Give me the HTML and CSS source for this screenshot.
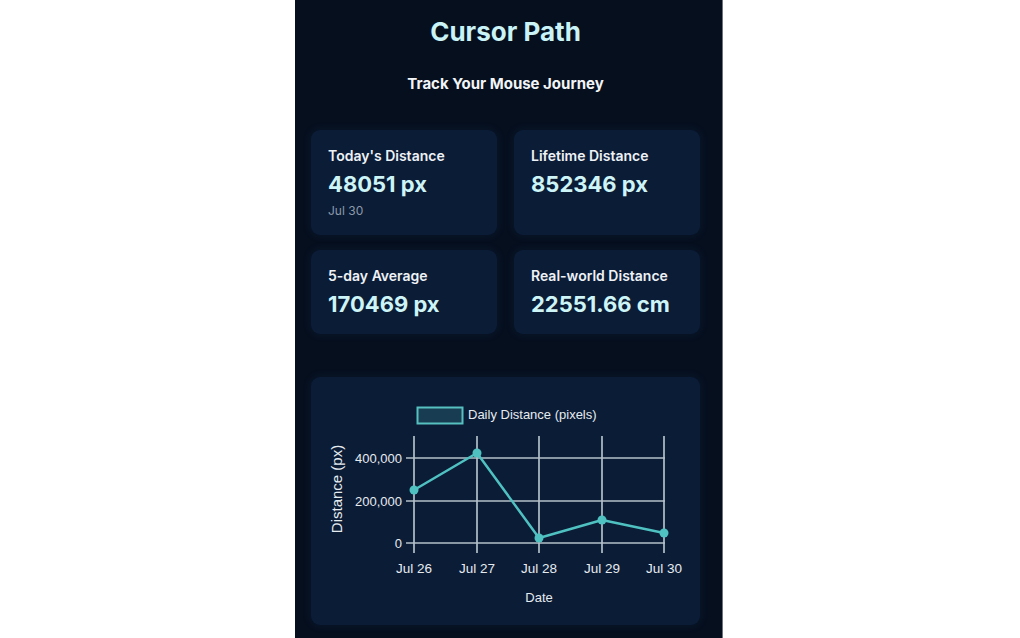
FILE: index.html
```html
<!DOCTYPE html>
<html lang="en">
<head>
<meta charset="utf-8">
<title>Cursor Path</title>
<link rel="stylesheet" href="styles.css">
</head>
<body>
<main class="panel">
  <h1 class="title">Cursor Path</h1>
  <p class="subtitle">Track Your Mouse Journey</p>
  <section class="stats">
    <div class="card">
      <div class="label">Today's Distance</div>
      <div class="value">48051 px</div>
      <div class="date">Jul 30</div>
    </div>
    <div class="card">
      <div class="label">Lifetime Distance</div>
      <div class="value">852346 px</div>
    </div>
    <div class="card">
      <div class="label">5-day Average</div>
      <div class="value">170469 px</div>
    </div>
    <div class="card">
      <div class="label">Real-world Distance</div>
      <div class="value">22551.66 cm</div>
    </div>
  </section>
  <section class="chart-card">
    <svg class="chart" width="390" height="248" viewBox="0 0 390 248">
      <rect class="legend-box" x="106.5" y="30.5" width="45" height="16"/>
      <text class="legend-text" x="157" y="42">Daily Distance (pixels)</text>
      <g class="grid">
        <line x1="95" y1="81" x2="354" y2="81"/>
        <line x1="95" y1="124" x2="354" y2="124"/>
        <line x1="95" y1="166" x2="354" y2="166"/>
        <line x1="103" y1="59" x2="103" y2="176"/>
        <line x1="166" y1="59" x2="166" y2="176"/>
        <line x1="228" y1="59" x2="228" y2="176"/>
        <line x1="291" y1="59" x2="291" y2="176"/>
        <line x1="353" y1="59" x2="353" y2="176"/>
      </g>
      <g class="ticks-y">
        <text x="91" y="86">400,000</text>
        <text x="91" y="129">200,000</text>
        <text x="91" y="171">0</text>
      </g>
      <g class="ticks-x">
        <text x="103" y="196">Jul 26</text>
        <text x="166" y="196">Jul 27</text>
        <text x="228" y="196">Jul 28</text>
        <text x="291" y="196">Jul 29</text>
        <text x="353" y="196">Jul 30</text>
      </g>
      <text class="axis-title" x="228" y="225">Date</text>
      <text class="axis-title axis-title-y" transform="translate(31 112) rotate(-90)" x="0" y="0">Distance (px)</text>
      <polyline class="series" points="103,113 166,76 228,161 291,143 353,156"/>
      <g class="points">
        <circle cx="103" cy="113" r="4.5"/>
        <circle cx="166" cy="76" r="4.5"/>
        <circle cx="228" cy="161" r="4.5"/>
        <circle cx="291" cy="143" r="4.5"/>
        <circle cx="353" cy="156" r="4.5"/>
      </g>
    </svg>
  </section>
</main>
</body>
</html>
```

FILE: styles.css
```css
* { box-sizing: border-box; }

html, body {
  margin: 0;
  padding: 0;
  background: #ffffff;
}

body {
  font-family: Inter, "Noto Sans", "Liberation Sans", sans-serif;
}

.panel {
  width: 428px;
  min-height: 638px;
  margin: 0 0 0 295px;
  padding: 12px 22px 12px 16px;
  background: #060f1e;
  border-right: 1px solid #6b7480;
  display: flex;
  flex-direction: column;
}

.title {
  margin: 5px 0 0;
  text-align: center;
  font-size: 26px;
  line-height: 30px;
  font-weight: 700;
  color: #c9f3f6;
}

.subtitle {
  margin: 27px 0 0;
  text-align: center;
  font-size: 15px;
  line-height: 20px;
  font-weight: 700;
  color: #f2f5f8;
}

.stats {
  margin-top: 36px;
  display: grid;
  grid-template-columns: 1fr 1fr;
  column-gap: 17px;
  row-gap: 15px;
}

.card {
  background: #0b1c36;
  border-radius: 9px;
  padding: 16px 17px 16px 17px;
  box-shadow: 0 0 8px rgba(30, 70, 120, 0.2);
}

.label {
  font-size: 14px;
  line-height: 20px;
  font-weight: 600;
  color: #eef2f6;
}

.value {
  margin-top: 4px;
  font-size: 22px;
  line-height: 28px;
  font-weight: 700;
  color: #cdf4f7;
}

.date {
  margin-top: 5px;
  font-size: 12px;
  line-height: 16px;
  color: #8d9aab;
}

.chart-card {
  margin-top: 43px;
  height: 248px;
  background: #0b1c36;
  border-radius: 9px;
  box-shadow: 0 0 8px rgba(30, 70, 120, 0.2);
  overflow: hidden;
}

.chart {
  display: block;
}

.chart text {
  font-family: "Liberation Sans", Arial, sans-serif;
  font-size: 13px;
  fill: #e6ebf0;
}

.chart .ticks-x text {
  font-size: 13.5px;
}

.chart .axis-title-y {
  font-size: 15px;
}

.legend-box {
  fill: rgba(79, 192, 192, 0.2);
  stroke: #56c0c0;
  stroke-width: 2;
}

.grid line {
  stroke: #b3c0c9;
  stroke-width: 1.7;
}

.ticks-y text {
  text-anchor: end;
}

.ticks-x text,
.axis-title {
  text-anchor: middle;
}

.series {
  fill: none;
  stroke: #4fc1c1;
  stroke-width: 2.5;
  stroke-linejoin: round;
}

.points circle {
  fill: #4fc1c1;
}
```
